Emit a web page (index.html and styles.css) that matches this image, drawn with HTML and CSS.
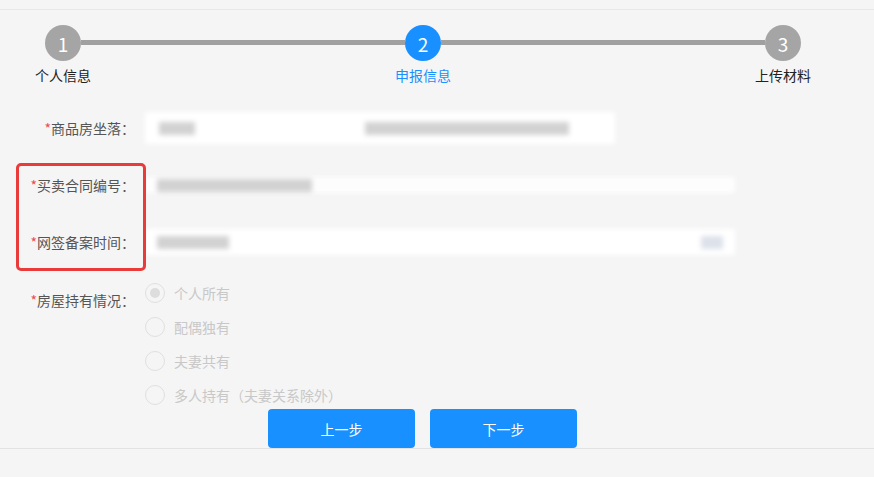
FILE: index.html
```html
<!DOCTYPE html>
<html lang="zh-CN">

<head>
  <meta charset="UTF-8">
  <meta name="viewport" content="width=device-width, initial-scale=1.0">
  <link rel="stylesheet" href="styles.css">
</head>

<body>
  <main class="page">
    <section class="panel">
      <ol class="steps">
        <li class="step">
          <span class="step__dot">1</span>
          <span class="step__label">个人信息</span>
        </li>
        <li class="step__line"></li>
        <li class="step step--active">
          <span class="step__dot">2</span>
          <span class="step__label">申报信息</span>
        </li>
        <li class="step__line"></li>
        <li class="step">
          <span class="step__dot">3</span>
          <span class="step__label">上传材料</span>
        </li>
      </ol>

      <form class="form">
        <div class="form__row">
          <label class="form__label"><i>*</i>商品房坐落：</label>
          <div class="field field--short">
            <span class="smudge" style="width: 36px; margin-left: 14px"></span>
            <span class="smudge smudge--white" style="width: 150px"></span>
            <span class="smudge" style="width: 205px; margin-left: 20px"></span>
            <span class="smudge smudge--white" style="width: 36px; margin-left: 10px"></span>
          </div>
        </div>

        <div class="form__row">
          <label class="form__label"><i>*</i>买卖合同编号：</label>
          <div class="field field--thin">
            <span class="smudge" style="width: 155px; margin-left: 12px"></span>
          </div>
        </div>

        <div class="form__row">
          <label class="form__label"><i>*</i>网签备案时间：</label>
          <div class="field">
            <span class="smudge" style="width: 72px; margin-left: 12px"></span>
            <span class="smudge smudge--blue" style="width: 22px; margin-left: auto; margin-right: 12px"></span>
          </div>
        </div>

        <div class="form__row form__row--radios">
          <label class="form__label"><i>*</i>房屋持有情况：</label>
          <div class="radios">
            <span class="radio radio--checked"><span class="radio__circle"></span>个人所有</span>
            <span class="radio"><span class="radio__circle"></span>配偶独有</span>
            <span class="radio"><span class="radio__circle"></span>夫妻共有</span>
            <span class="radio"><span class="radio__circle"></span>多人持有（夫妻关系除外）</span>
          </div>
        </div>

        <div class="form__actions">
          <button type="button" class="btn">上一步</button>
          <button type="button" class="btn">下一步</button>
        </div>
      </form>

      <div class="mark"></div>
    </section>
  </main>
</body>

</html>
```

FILE: styles.css
```css
* {
  box-sizing: border-box;
}

body {
  margin: 0;
  background-color: #f5f5f5;
  font-family: "Noto Sans CJK SC", "Noto Sans", sans-serif;
  font-size: 14px;
  color: #333;
}

.page {
  padding-top: 9px;
  height: 100vh;
}

.panel {
  position: relative;
  border-top: 1px solid #e8e8e8;
  border-bottom: 1px solid #e2e2e2;
  padding-top: 15px;
}

/* steps */
.steps {
  display: flex;
  align-items: flex-start;
  list-style: none;
  margin: 0 73px 0 45px;
  padding: 0;
}

.step {
  display: flex;
  flex-direction: column;
  align-items: center;
  width: 36px;
}

.step__dot {
  display: flex;
  align-items: center;
  justify-content: center;
  width: 36px;
  height: 36px;
  border-radius: 50%;
  background-color: #a5a5a5;
  color: #fff;
  font-size: 19px;
}

.step__label {
  margin-top: 6px;
  white-space: nowrap;
  font-size: 14px;
  line-height: 16px;
  color: #222;
}

.step--active .step__dot {
  background-color: #1890ff;
}

.step--active .step__label {
  color: #1890ff;
}

.step__line {
  flex: 1;
  height: 5px;
  margin-top: 15px;
  background-color: #a0a0a0;
}

/* form */
.form {
  padding-top: 28px;
}

.form__row {
  display: flex;
  align-items: center;
  height: 34px;
  margin-bottom: 23px;
}

.form__label {
  width: 145px;
  padding-right: 10px;
  text-align: right;
  color: #555;
  font-size: 14px;
}

.form__label i {
  font-style: normal;
  color: #f04b4b;
}

.field {
  display: flex;
  align-items: center;
  width: 590px;
  height: 26px;
  background-color: #fff;
  filter: blur(2.5px);
}

.field--short {
  width: 470px;
  height: 32px;
}

.field--thin {
  height: 16px;
  background-color: #fdfdfd;
}

.smudge {
  height: 13px;
  background-color: #d2d2d2;
}

.smudge--white {
  background-color: #fff;
}

.smudge--blue {
  background-color: #dde1ea;
}

.form__row--radios {
  align-items: flex-start;
  height: auto;
  margin-bottom: 0;
}

.form__row--radios .form__label {
  padding-top: 8px;
}

.radios {
  display: flex;
  flex-direction: column;
  gap: 12px;
}

.radio {
  display: flex;
  align-items: center;
  gap: 9px;
  height: 22px;
  color: #c8c8c8;
  font-size: 14px;
}

.radio__circle {
  position: relative;
  width: 20px;
  height: 20px;
  border: 1px solid #e0e0e0;
  border-radius: 50%;
  background-color: #f5f5f5;
}

.radio--checked .radio__circle::after {
  content: "";
  position: absolute;
  top: 4px;
  left: 4px;
  width: 10px;
  height: 10px;
  border-radius: 50%;
  background-color: #ddd;
}

.form__actions {
  display: flex;
  gap: 15px;
  padding: 3px 0 0 268px;
}

.btn {
  width: 147px;
  height: 39px;
  border: none;
  border-radius: 4px;
  background-color: #1890ff;
  color: #fff;
  font-family: inherit;
  font-size: 14px;
}

/* annotation */
.mark {
  position: absolute;
  left: 16px;
  top: 153px;
  width: 130px;
  height: 108px;
  border: 3px solid #ea3b3b;
  border-radius: 5px;
}
```
